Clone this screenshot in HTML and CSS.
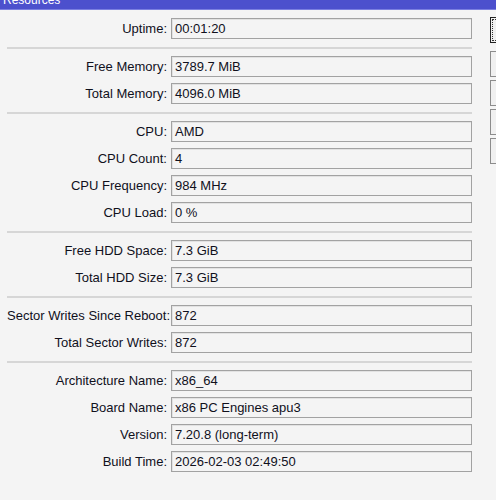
FILE: index.html
```html
<!DOCTYPE html>
<html lang="en">
<head>
    <meta charset="UTF-8">
    <title>Resources</title>
    <link rel="stylesheet" href="styles.css">
</head>
<body>
    <div class="titlebar"><span>Resources</span></div>

    <div class="content">
        <div class="form">
            <div class="group">
                <div class="row"><label>Uptime:</label><div class="field">00:01:20</div></div>
            </div>
            <hr class="sep">
            <div class="group">
                <div class="row"><label>Free Memory:</label><div class="field">3789.7 MiB</div></div>
                <div class="row"><label>Total Memory:</label><div class="field">4096.0 MiB</div></div>
            </div>
            <hr class="sep">
            <div class="group">
                <div class="row"><label>CPU:</label><div class="field">AMD</div></div>
                <div class="row"><label>CPU Count:</label><div class="field">4</div></div>
                <div class="row"><label>CPU Frequency:</label><div class="field">984 MHz</div></div>
                <div class="row"><label>CPU Load:</label><div class="field">0 %</div></div>
            </div>
            <hr class="sep">
            <div class="group">
                <div class="row"><label>Free HDD Space:</label><div class="field">7.3 GiB</div></div>
                <div class="row"><label>Total HDD Size:</label><div class="field">7.3 GiB</div></div>
            </div>
            <hr class="sep">
            <div class="group">
                <div class="row"><label>Sector Writes Since Reboot:</label><div class="field">872</div></div>
                <div class="row"><label>Total Sector Writes:</label><div class="field">872</div></div>
            </div>
            <hr class="sep">
            <div class="group">
                <div class="row"><label>Architecture Name:</label><div class="field">x86_64</div></div>
                <div class="row"><label>Board Name:</label><div class="field">x86 PC Engines apu3</div></div>
                <div class="row"><label>Version:</label><div class="field">7.20.8 (long-term)</div></div>
                <div class="row"><label>Build Time:</label><div class="field">2026-02-03 02:49:50</div></div>
            </div>
        </div>

        <div class="buttons">
            <button class="btn focused" aria-label="OK"></button>
            <button class="btn" aria-label="Cancel"></button>
            <button class="btn" aria-label="Apply"></button>
            <button class="btn" aria-label="PCI"></button>
            <button class="btn" aria-label="USB"></button>
        </div>
    </div>
</body>
</html>
```

FILE: styles.css
```css
body {
    margin: 0;
    background-color: #f4f4f4;
    color: #10101c;
    font-family: 'Liberation Sans', Arial, sans-serif;
    font-size: 13px;
    overflow: hidden;
}

.titlebar {
    height: 9px;
    overflow: hidden;
    background-color: #4c50cd;
    border-bottom: 1px solid #7b7fe0;
    color: #fff;
    font-size: 12px;
}

.titlebar span {
    display: block;
    margin-top: -7px;
    padding-left: 3px;
    line-height: 14px;
}

.content {
    display: flex;
    gap: 18px;
    padding: 8px 0 0 7px;
}

.form {
    width: 465px;
    flex-shrink: 0;
}

.group {
    display: flex;
    flex-direction: column;
    gap: 6px;
}

.row {
    display: grid;
    grid-template-columns: 160px 1fr;
    gap: 4px;
    align-items: center;
}

.row label {
    text-align: right;
    white-space: nowrap;
}

.field {
    height: 19px;
    line-height: 19px;
    padding: 0 3px;
    border: 1px solid #a2a2a2;
    box-shadow: inset 1px 1px 0 #e2e2e2;
    background-color: #f4f4f4;
    white-space: nowrap;
}

.sep {
    height: 2px;
    margin: 8px 0 7px;
    border: none;
    background-color: #d6d6d6;
}

.buttons {
    display: flex;
    flex-direction: column;
    gap: 3px;
    margin-top: -1px;
}

.btn {
    width: 80px;
    height: 26px;
    background-color: #f0f0f0;
    border: 1px solid #8c8c8c;
    padding: 0;
}

.btn.focused {
    border-color: #222;
    outline: 1px dotted #333;
    outline-offset: -3px;
    margin-bottom: 5px;
}
```
